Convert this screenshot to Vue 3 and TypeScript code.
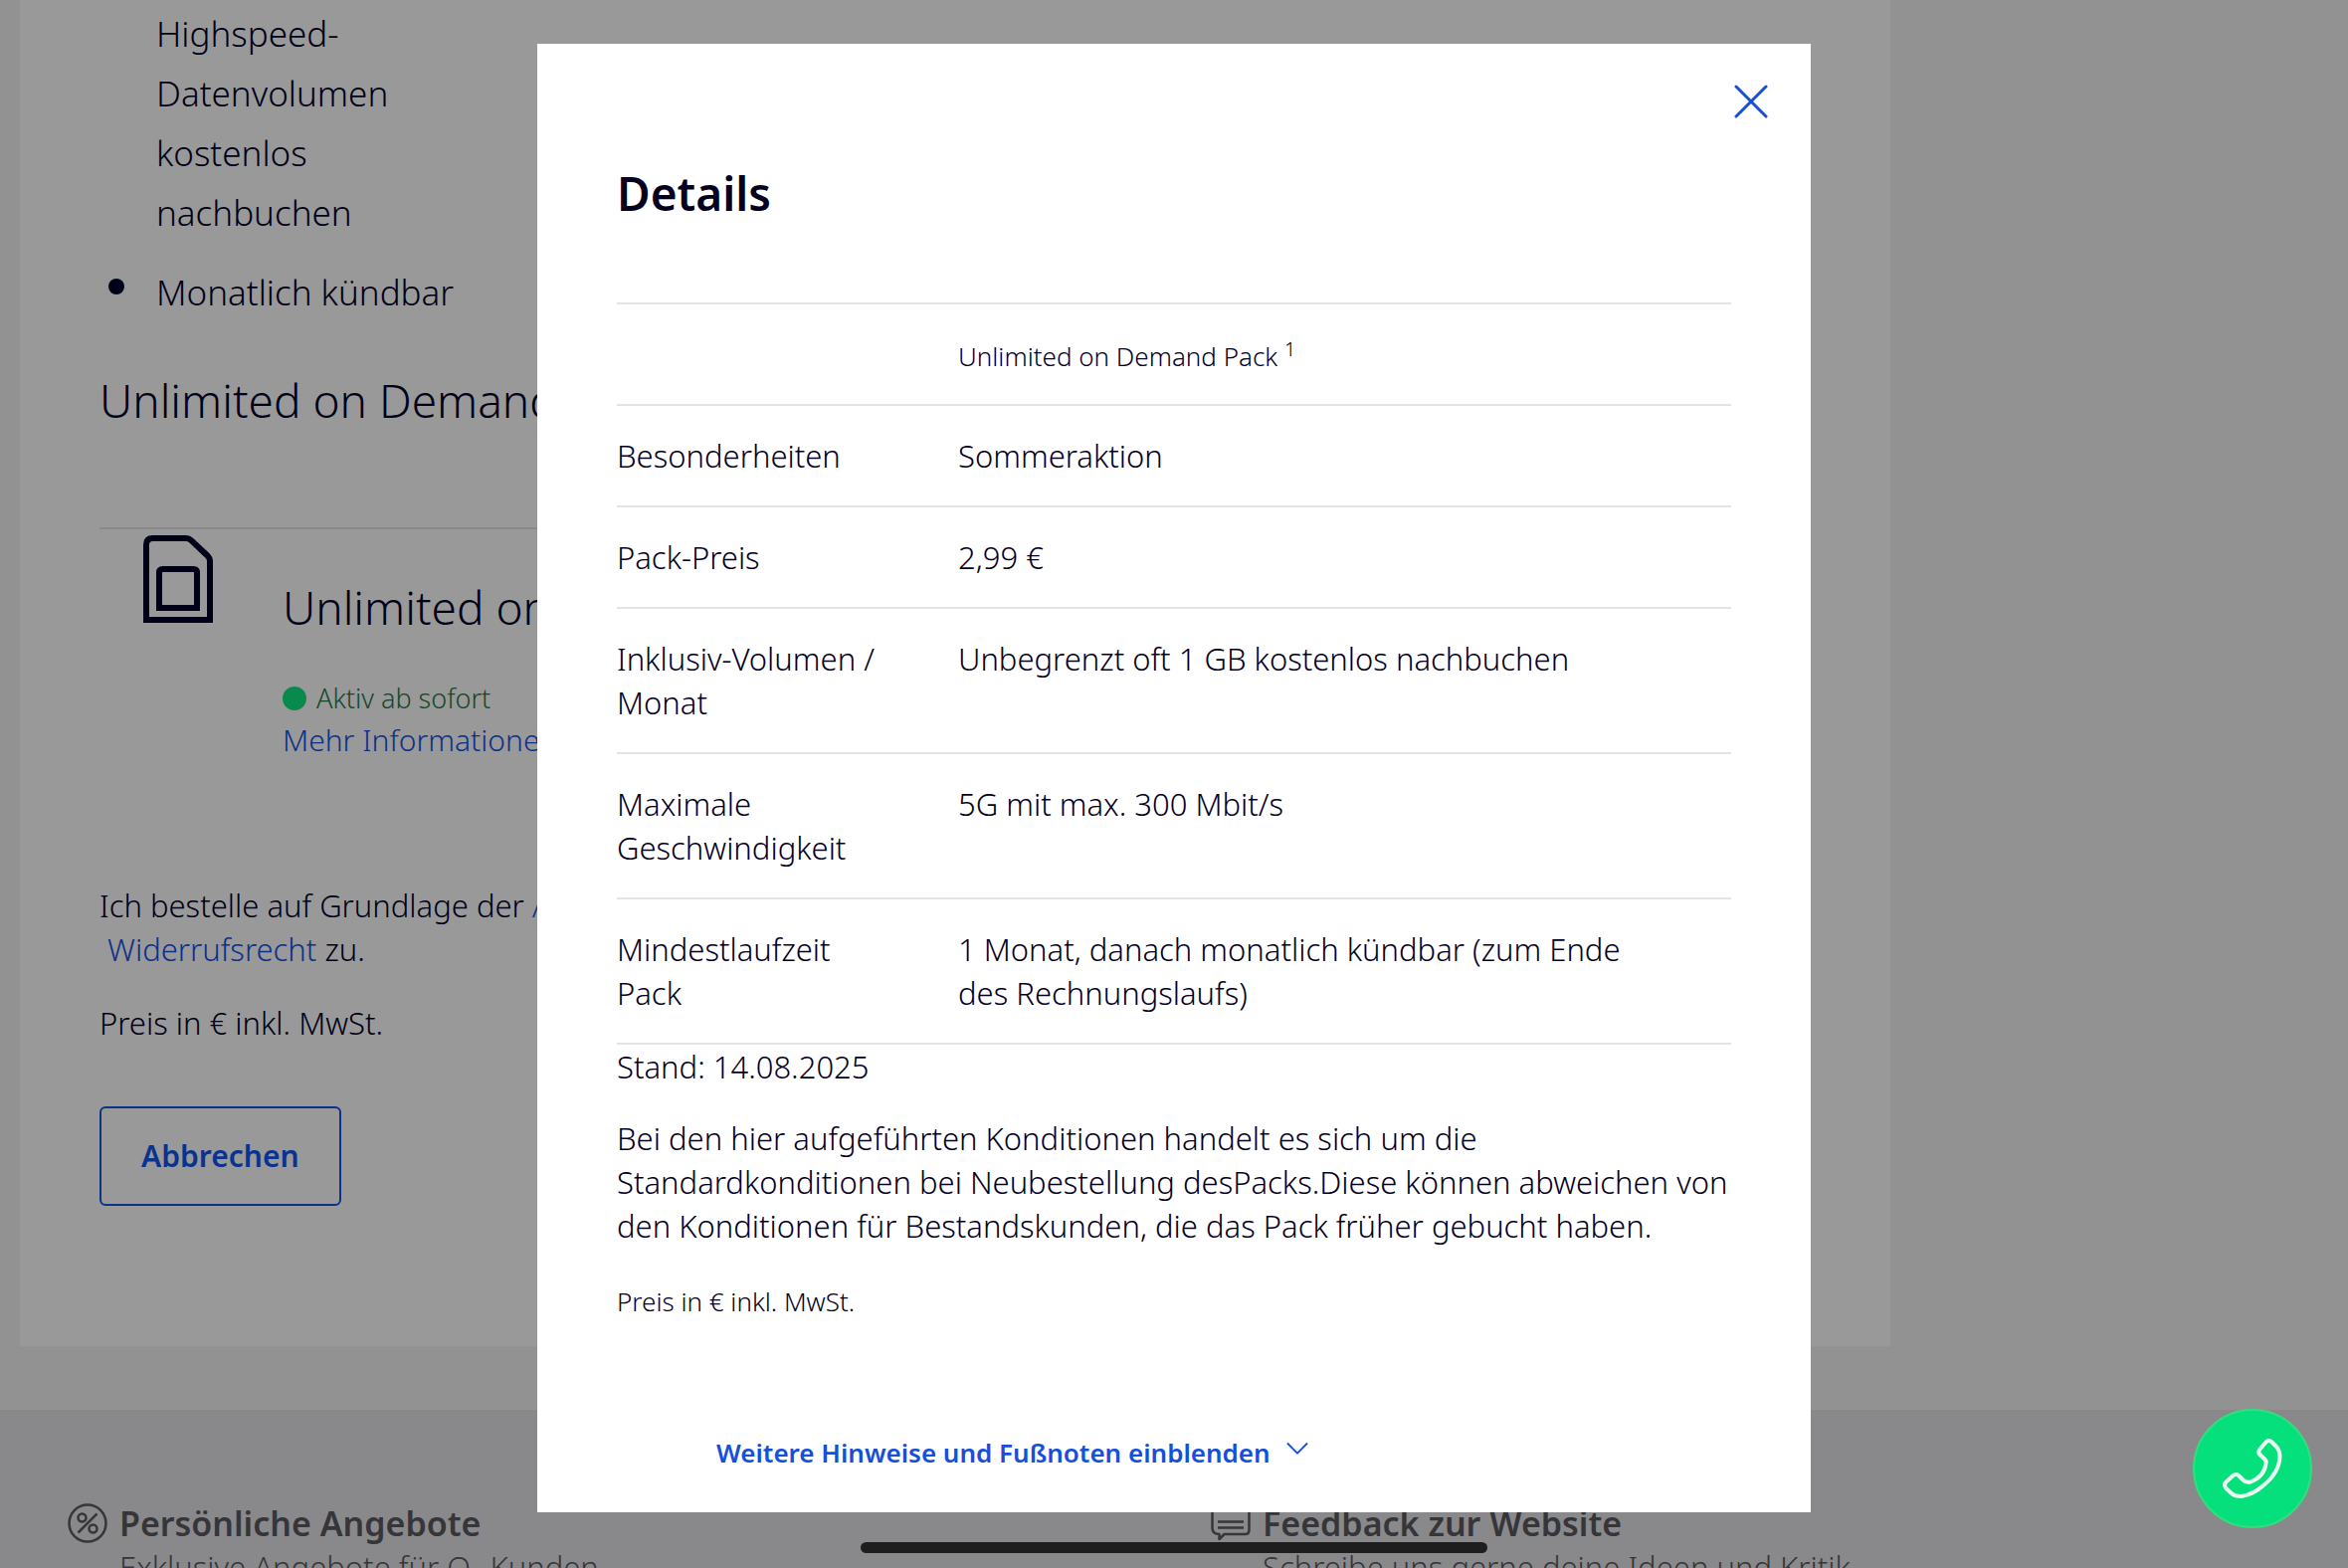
<script setup lang="ts">
import { ref } from 'vue'

interface DetailRow {
  label: string
  value: string
}

const rows: DetailRow[] = [
  { label: 'Besonderheiten', value: 'Sommeraktion' },
  { label: 'Pack-Preis', value: '2,99 €' },
  { label: 'Inklusiv-Volumen / Monat', value: 'Unbegrenzt oft 1 GB kostenlos nachbuchen' },
  { label: 'Maximale Geschwindigkeit', value: '5G mit max. 300 Mbit/s' },
  { label: 'Mindestlaufzeit Pack', value: '1 Monat, danach monatlich kündbar (zum Ende des Rechnungslaufs)' },
]

const dialogOpen = ref(true)
</script>

<template>
  <div class="page">
    <main class="card">
      <ul class="benefits">
        <li class="continued">Highspeed-Datenvolumen kostenlos nachbuchen</li>
        <li>Monatlich kündbar</li>
      </ul>
      <h2 class="headline">Unlimited on Demand Pack</h2>

      <section class="pack">
        <svg class="sim" viewBox="0 0 70 88" fill="none" stroke="currentColor" stroke-width="6" aria-hidden="true">
          <path d="M3 85V9.500Q3 3 9.500 3H43Q46 3 48.200 5.200L64.500 20.500Q67 23 67 26V85Z" />
          <path d="M16 73V37.500Q16 34 19.500 34H50.500Q54 34 54 37.500V73Z" />
        </svg>
        <div class="pack-text">
          <h3 class="headline">Unlimited on Demand Pack</h3>
          <p class="status"><span class="dot"></span>Aktiv ab sofort</p>
          <a class="more" href="#">Mehr Informationen</a>
        </div>
      </section>

      <p class="terms">
        Ich bestelle auf Grundlage der <a href="#">AGB</a> und stimme dem<br />
        &nbsp;<a href="#">Widerrufsrecht</a> zu.
      </p>
      <p class="terms">Preis in € inkl. MwSt.</p>
      <button class="cancel" type="button">Abbrechen</button>
    </main>

    <footer class="footer">
      <div class="teaser">
        <svg class="teaser-icon" viewBox="0 0 40 40" fill="none" stroke="currentColor" stroke-width="2.500" aria-hidden="true">
          <circle cx="20" cy="20" r="18.500" />
          <circle cx="14.500" cy="14.500" r="4" />
          <circle cx="25.500" cy="25.500" r="4" />
          <path d="M29.500 10.500L10.500 29.500" />
        </svg>
        <div>
          <h4>Persönliche Angebote</h4>
          <p>Exklusive Angebote für O<sub>2</sub> Kunden</p>
        </div>
      </div>
      <div class="teaser">
        <svg class="teaser-icon" viewBox="0 0 40 40" fill="none" stroke="currentColor" stroke-width="2.500" stroke-linejoin="round" aria-hidden="true">
          <path d="M1.500 3H38.500V27Q38.500 31 34.500 31H13.500L8.500 36V31Q1.500 31 1.500 25Z" />
          <path d="M7 18.500H33M7 24.500H33" />
        </svg>
        <div>
          <h4>Feedback zur Website</h4>
          <p>Schreibe uns gerne deine Ideen und Kritik</p>
        </div>
      </div>
    </footer>
  </div>

  <div v-if="dialogOpen" class="backdrop">
    <div class="dialog" role="dialog" aria-modal="true" aria-labelledby="dialog-title">
      <button class="close" type="button" aria-label="Schließen" @click="dialogOpen = false">
        <svg viewBox="0 0 34 34" fill="none" stroke="currentColor" stroke-width="3" stroke-linecap="round">
          <path d="M2 2L32 32M32 2L2 32" />
        </svg>
      </button>
      <h1 id="dialog-title">Details</h1>
      <table>
        <thead>
          <tr>
            <td></td>
            <th scope="col">Unlimited on Demand Pack <sup>1</sup></th>
          </tr>
        </thead>
        <tbody>
          <tr v-for="row in rows" :key="row.label">
            <th scope="row">{{ row.label }}</th>
            <td>{{ row.value }}</td>
          </tr>
        </tbody>
      </table>
      <p>Stand: 14.08.2025</p>
      <p>
        Bei den hier aufgeführten Konditionen handelt es sich um die Standardkonditionen bei Neubestellung
        desPacks.Diese können abweichen von den Konditionen für Bestandskunden, die das Pack früher gebucht haben.
      </p>
      <p class="small">Preis in € inkl. MwSt.</p>
      <button class="notes" type="button">
        Weitere Hinweise und Fußnoten einblenden
        <svg viewBox="0 0 24 14" fill="none" stroke="currentColor" stroke-width="2" aria-hidden="true">
          <path d="M1 1L12 12L23 1" />
        </svg>
      </button>
    </div>
  </div>

  <button class="call" type="button" aria-label="Anrufen">
    <svg viewBox="0 0 60 60" fill="none" stroke="currentColor" stroke-width="4" stroke-linejoin="round" aria-hidden="true">
      <path d="M37.500 10.500L43.500 3.500Q46.500 0.500 49.500 3.500L54 8Q57.500 12 57.500 18Q57 34 41 47Q31 56 19 58Q12 58 9 55L3.500 50Q0.500 46.500 3.500 43.500L10 37.500Q13.500 34.500 16.500 37.500L20.500 41.500Q23.500 44.500 28 43.500Q42 38 43.500 25Q44.500 22 41 19.500L37.500 16Q35 13.500 37.500 10.500Z" />
    </svg>
  </button>
  <div class="home-bar"></div>
</template>

<style>
body {
  margin: 0;
  background: #f4f4f4;
}
</style>

<style scoped>
.page,
.backdrop,
.call {
  font-family: "Noto Sans", "Open Sans", sans-serif;
  font-weight: 300;
  font-size: 31px;
  line-height: 44px;
  color: #01002a;
}

h1,
h2,
h3,
h4,
p,
ul {
  margin: 0;
  padding: 0;
}

button {
  font: inherit;
  cursor: pointer;
}

a {
  color: #1650e8;
  text-decoration: none;
}

svg {
  display: block;
}

.page {
  display: flex;
  flex-direction: column;
  gap: 64px;
  height: 100vh;
  overflow: hidden;
  background: #f4f4f4;
}

.card {
  flex: none;
  width: 80%;
  max-width: 1880px;
  margin-left: 20px;
  padding: 4px 80px 141px;
  box-sizing: border-box;
  background: #fff;
}

.benefits {
  display: flex;
  flex-direction: column;
  gap: 20px;
  width: 376px;
  list-style: none;
  font-size: 35px;
  line-height: 60px;
}

.benefits li {
  position: relative;
  padding-left: 57px;
}

.benefits li:not(.continued)::before {
  content: "";
  position: absolute;
  left: 9px;
  top: 16px;
  width: 16px;
  height: 16px;
  border-radius: 50%;
  background: currentColor;
}

.headline {
  font-size: 46px;
  line-height: 60px;
  font-weight: 300;
}

h2.headline {
  margin-top: 48px;
}

.pack {
  display: flex;
  gap: 70px;
  margin-top: 98px;
  padding: 6px 44px 0;
  border-top: 2px solid #e4e4e4;
}

.sim {
  width: 70px;
  height: 88px;
}

.pack-text {
  padding-top: 42px;
}

.status {
  display: flex;
  align-items: center;
  gap: 10px;
  margin-top: 42px;
  font-size: 27px;
  line-height: 40px;
  color: #1f7a4a;
}

.dot {
  width: 24px;
  height: 24px;
  border-radius: 50%;
  background: #0de67d;
}

.more {
  display: block;
  font-size: 30px;
}

.terms {
  margin-bottom: 30px;
}

.pack + .terms {
  margin-top: 122px;
}

.cancel {
  display: block;
  margin-top: 62px;
  padding: 26px 40px;
  border: 2px solid #1650e8;
  border-radius: 6px;
  background: transparent;
  font-size: 30px;
  font-weight: 600;
  color: #1056f0;
}

.footer {
  flex: 1;
  display: grid;
  grid-template-columns: 1fr 1fr;
  column-gap: 74px;
  padding: 92px 68px 0;
  background: #e5e5e8;
  color: #5a5a62;
}

.teaser {
  display: flex;
  gap: 12px;
}

.teaser-icon {
  flex: none;
  width: 40px;
  height: 40px;
  margin-top: 2px;
}

.teaser h4 {
  font-size: 34px;
  font-weight: 600;
}

.teaser p {
  white-space: nowrap;
}

sub,
sup {
  font-size: 20px;
  line-height: 0;
}

.backdrop {
  position: fixed;
  inset: 0;
  display: flex;
  justify-content: center;
  align-items: flex-start;
  padding: 44px 40px 0;
  background: rgba(0, 0, 0, 0.4);
}

.dialog {
  position: relative;
  width: 100%;
  max-width: 1280px;
  padding: 120px 80px 38px;
  box-sizing: border-box;
  background: #fff;
  color: #05001e;
}

.close {
  position: absolute;
  top: 41px;
  right: 43px;
  padding: 0;
  border: 0;
  background: transparent;
  color: #1650d0;
}

.close svg {
  width: 34px;
  height: 34px;
}

h1 {
  margin-bottom: 80px;
  font-size: 46px;
  line-height: 60px;
  font-weight: 600;
}

table {
  width: 100%;
  table-layout: fixed;
  border-collapse: collapse;
}

tr {
  border-top: 2px solid #e3e3e3;
  border-bottom: 2px solid #e3e3e3;
}

th,
td {
  padding: 28px 72px 28px 0;
  font-weight: inherit;
  text-align: left;
  vertical-align: top;
}

tbody td {
  padding-right: 92px;
}

tr > :first-child {
  width: 271px;
}

thead th {
  padding-top: 30px;
  padding-bottom: 26px;
  font-size: 26px;
}

.dialog p {
  margin-bottom: 28px;
}

.dialog .small {
  font-size: 26px;
  margin: 32px 0 0;
}

.notes {
  display: flex;
  align-items: center;
  gap: 16px;
  margin: 108px 0 0 100px;
  padding: 0;
  border: 0;
  background: transparent;
  font-size: 26px;
  font-weight: 600;
  color: #1650d8;
}

.notes svg {
  width: 22px;
  height: 14px;
  margin-bottom: 8px;
}

.call {
  position: fixed;
  right: 36px;
  bottom: 40px;
  display: grid;
  place-items: center;
  width: 120px;
  height: 120px;
  padding: 0;
  border: 2px solid #34dc80;
  border-radius: 50%;
  background: #05e07d;
  color: #e8fff2;
}

.call svg {
  width: 60px;
  height: 60px;
}

.home-bar {
  position: fixed;
  left: 50%;
  bottom: 15px;
  width: 630px;
  height: 11px;
  margin-left: -315px;
  border-radius: 6px;
  background: #1e1e1e;
}
</style>
